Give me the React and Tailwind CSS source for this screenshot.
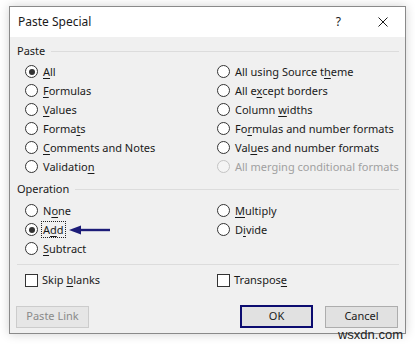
const font = { fontFamily: '"Noto Sans", "Open Sans", sans-serif' };

function U({ children }) {
  return <span className="underline underline-offset-2 decoration-1">{children}</span>;
}

function Radio({ checked, disabled, children, focus }) {
  return (
    <div className="flex items-center h-[19px] whitespace-nowrap">
      <span
        className={
          "w-[13px] h-[13px] rounded-full border flex items-center justify-center shrink-0 " +
          (disabled ? "border-[#c4c4c4] bg-[#f4f4f4]" : "border-[#333333] bg-white")
        }
      >
        {checked && <span className="w-[6px] h-[6px] rounded-full bg-[#333333]" />}
      </span>
      <span
        className={
          "ml-[3px] px-[1px] leading-[15px] border " +
          (focus ? "border-dotted border-[#222]" : "border-transparent") +
          (disabled ? " text-[#a0a0a0]" : " text-[#1a1a1a]")
        }
      >
        {children}
      </span>
    </div>
  );
}

function Check({ children }) {
  return (
    <div className="flex items-center h-[19px] whitespace-nowrap">
      <span className="w-[13px] h-[13px] border border-[#333333] bg-white shrink-0" />
      <span className="ml-[4px] text-[#1a1a1a]">{children}</span>
    </div>
  );
}

function Header({ children }) {
  return (
    <div className="flex items-center h-[18px] pl-[7px] pr-[6px]">
      <span className="text-[#1a1a1a]">{children}</span>
      <span className="flex-1 h-px bg-[#dcdcdc] ml-[6px]" />
    </div>
  );
}

export default function App() {
  return (
    <div className="w-[415px] h-[344px] bg-white relative overflow-hidden pt-[6px] pl-[9px] text-[11px]" style={font}>
      <div className="w-[397px] h-[328px] border border-[#8a8a8a] bg-[#f0f0f0] flex flex-col shadow-[0_0_10px_rgba(0,0,0,0.18)]">
        <div className="h-[30px] bg-white flex items-center pl-[8px] shrink-0">
          <span className="text-[12px] text-[#1a1a1a]">Paste Special</span>
          <span className="ml-auto text-[12px] text-[#1a1a1a] mr-[37px]">?</span>
          <svg width="10" height="10" viewBox="0 0 10 10" className="mr-[17px]">
            <path d="M0.5 0.5L9.5 9.5M9.5 0.5L0.5 9.5" stroke="#1a1a1a" strokeWidth="1" />
          </svg>
        </div>

        <div className="pt-[5px]">
          <Header>Paste</Header>
          <div className="grid grid-cols-[192px_1fr] pl-[15px] mt-[2px]">
            <div className="flex flex-col">
              <Radio checked><U>A</U>ll</Radio>
              <Radio><U>F</U>ormulas</Radio>
              <Radio><U>V</U>alues</Radio>
              <Radio>Forma<U>t</U>s</Radio>
              <Radio><U>C</U>omments and Notes</Radio>
              <Radio>Validatio<U>n</U></Radio>
            </div>
            <div className="flex flex-col">
              <Radio>All using Source t<U>h</U>eme</Radio>
              <Radio>All e<U>x</U>cept borders</Radio>
              <Radio>Column <U>w</U>idths</Radio>
              <Radio>Fo<U>r</U>mulas and number formats</Radio>
              <Radio>Val<U>u</U>es and number formats</Radio>
              <Radio disabled>All merging conditional formats</Radio>
            </div>
          </div>

          <div className="mt-[4px]">
            <Header>Operation</Header>
          </div>
          <div className="grid grid-cols-[192px_1fr] pl-[15px] mt-[3px]">
            <div className="flex flex-col">
              <Radio>N<U>o</U>ne</Radio>
              <div className="flex items-center">
                <Radio checked focus>A<U>d</U>d</Radio>
                <svg width="42" height="10" viewBox="0 0 42 10" className="ml-[3px]">
                  <path d="M11 3.8H41V6.2H11Z" fill="#1c1c78" />
                  <path d="M0 5L12 0.5V9.5Z" fill="#1c1c78" />
                </svg>
              </div>
              <Radio><U>S</U>ubtract</Radio>
            </div>
            <div className="flex flex-col">
              <Radio><U>M</U>ultiply</Radio>
              <Radio>D<U>i</U>vide</Radio>
            </div>
          </div>

          <div className="ml-[7px] mr-[6px] h-px bg-[#dcdcdc] mt-[6px]" />

          <div className="grid grid-cols-[192px_1fr] pl-[15px] mt-[6px]">
            <Check>Skip <U>b</U>lanks</Check>
            <Check>Transpos<U>e</U></Check>
          </div>

          <div className="flex items-center pl-[6px] pr-[7px] mt-[15px]">
            <div className="w-[73px] h-[22px] border border-[#cccccc] bg-[#e6e6e6] text-[#8a8a8a] flex items-center justify-center">
              Paste Link
            </div>
            <div className="ml-auto w-[73px] h-[23px] border-2 border-[#0c0c70] bg-[#e1e1e1] text-[#1a1a1a] flex items-center justify-center">
              OK
            </div>
            <div className="ml-[12px] w-[73px] h-[22px] border border-[#adadad] bg-[#e1e1e1] text-[#1a1a1a] flex items-center justify-center">
              Cancel
            </div>
          </div>
        </div>
      </div>
      <span
        className="absolute right-[12px] top-[327px] text-[13px] text-[#222] leading-[15px]"
        style={{ fontFamily: '"Liberation Sans", Arial, sans-serif' }}
      >
        wsxdn.com
      </span>
    </div>
  );
}
